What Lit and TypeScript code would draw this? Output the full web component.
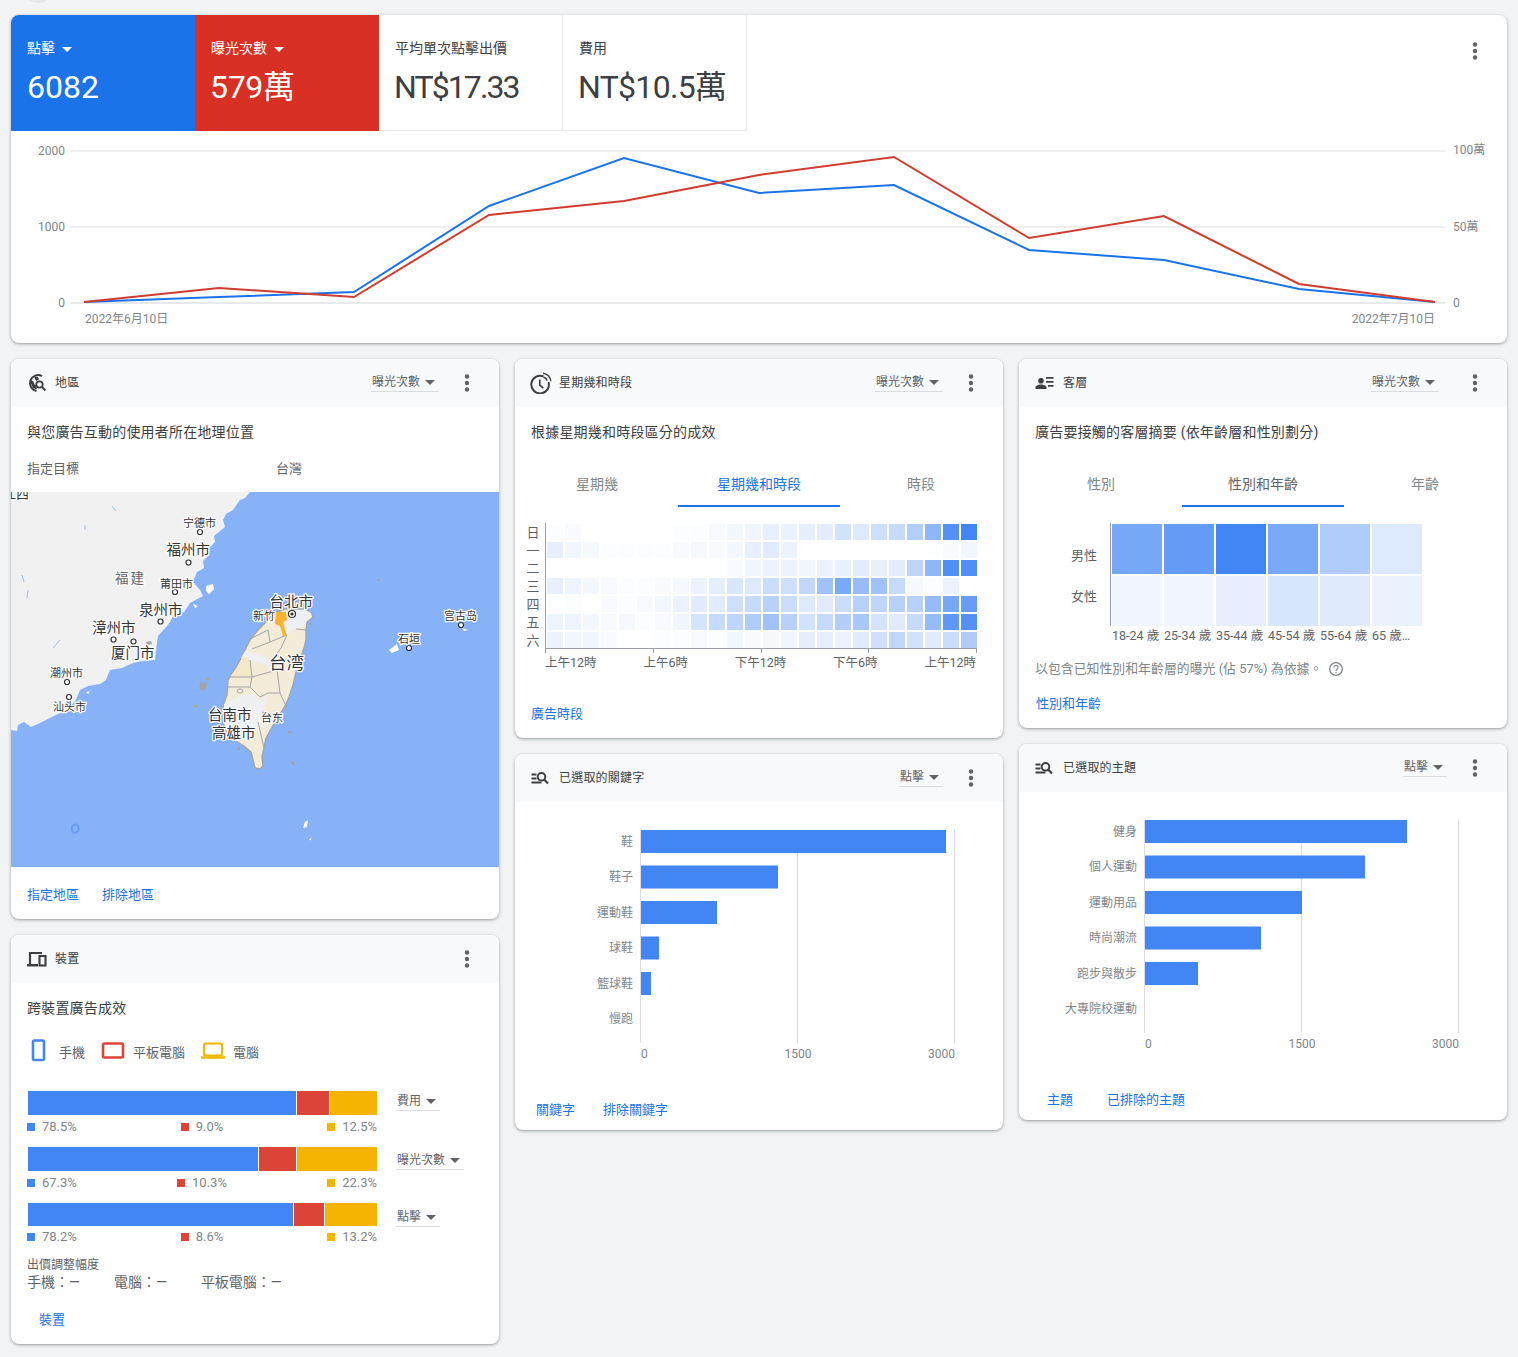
import { LitElement, html, svg, css } from 'lit'
import { customElement } from 'lit/decorators.js'

const BLUE = '#4285f4'

const HEAT = [
  [.02, .03, 0, 0, 0, 0, 0, .02, .02, .04, .06, .08, .12, .11, .14, .15, .23, .18, .26, .3, .4, .6, .9, 1],
  [.13, .07, .05, .02, .02, .02, .02, .04, .05, .04, .06, .12, .16, .1, 0, 0, 0, 0, 0, 0, 0, .01, .03, .07],
  [0, 0, 0, 0, 0, 0, 0, 0, 0, 0, .03, .08, .1, .1, .08, .1, .12, .15, .12, .15, .35, .6, .92, .92],
  [.12, .09, .06, .04, .02, .02, .03, .05, .1, .14, .2, .18, .28, .26, .32, .5, .7, .55, .5, .3, .05, .02, .1, 0],
  [.01, .02, 0, .03, .02, .04, .07, .1, .16, .16, .26, .3, .38, .28, .18, .16, .28, .38, .34, .38, .38, .56, .72, .8],
  [.09, .09, .06, .04, .05, .02, .04, .08, .22, .3, .34, .42, .5, .38, .24, .3, .4, .46, .22, .16, .3, .56, .85, .9],
  [.1, .07, .08, .03, 0, 0, .02, .02, .04, .02, .06, .04, .05, .08, .14, .13, .1, .16, .25, .32, .24, .16, .28, .42],
]

const GENDER = [
  [.72, .82, 1, .7, .42, .18],
  [.08, .08, .13, .2, .17, .11],
]

const DEVICE_ROWS = [
  { label: '費用', split: [268, 32, 47], values: ['78.5%', '9.0%', '12.5%'], barH: 24, gap: 5, drop: 2 },
  { label: '曝光次數', split: [230, 37, 80], values: ['67.3%', '10.3%', '22.3%'], barH: 24, gap: 5, drop: 5 },
  { label: '點擊', split: [265, 30, 52], values: ['78.2%', '8.6%', '13.2%'], barH: 23, gap: 4, drop: 6 },
]

const BLUE_LINE = [[84, 302], [219, 297], [354, 292], [489, 206], [624, 158], [759, 193], [894, 185], [1029, 250], [1164, 260], [1299, 289], [1435, 302]]
const RED_LINE = [[84, 302], [219, 288], [354, 297], [489, 215], [624, 201], [759, 175], [894, 157], [1029, 238], [1164, 216], [1299, 284], [1435, 302]]

const MAP_LABELS: [string, number, number, number, string?][] = [
  ['宁德市', 183, 527, 11],
  ['福州市', 166.500, 555, 14.500],
  ['福建', 115, 583, 13.500, 'prov'],
  ['莆田市', 160, 588, 11],
  ['泉州市', 139, 615, 14.500],
  ['漳州市', 92, 633, 14.500],
  ['厦门市', 111, 658, 14.500],
  ['潮州市', 50, 677, 11],
  ['汕头市', 53, 711, 11],
  ['台北市', 269.500, 607, 14.500],
  ['新竹', 253, 620, 11],
  ['宫古岛', 444, 620, 11],
  ['石垣', 398, 643, 11],
  ['台湾', 269, 669, 17.500],
  ['台南市', 208, 720, 14.500],
  ['台东', 261, 722, 11],
  ['高雄市', 212, 738, 14.500],
]

const MAP_DOTS = [[200, 532], [188.500, 562.500], [175, 592], [160.500, 621.500], [113.500, 639.500], [133.500, 641.500], [67, 682], [69, 697], [461, 625], [409, 648]]

const kebab = html`<svg class="kebab" width="24" height="24" viewBox="0 0 24 24"><circle cx="12" cy="5.500" r="2.200"/><circle cx="12" cy="12" r="2.200"/><circle cx="12" cy="18.500" r="2.200"/></svg>`

const icons = {
  geo: html`<svg width="20" height="20" viewBox="0 0 20 20" fill="none" stroke="#3c4043"><path d="M15 3.200A8 8 0 1 0 9.500 18" stroke-width="2"/><path d="M3 6.500l3.500 2 1 3 2.500 1.500-.5 3.500-3.500-1.500-1.500-3.500L2.500 9.500z" fill="#3c4043" stroke="none"/><path d="M7 3.500l4 .5 1 2.500-3 1.500z" fill="#3c4043" stroke="none"/><circle cx="12.500" cy="11.500" r="3.200" stroke-width="1.800"/><path d="M15 14l3.500 3.500" stroke-width="2"/></svg>`,
  clock: html`<svg width="22" height="22" viewBox="0 0 22 22" fill="none" stroke="#3c4043" style="margin-left:-1px"><path d="M13.500 4.500A8.800 8.800 0 1 0 18.500 10" stroke-width="2"/><path d="M9.800 7.500v5.700l3.500 3" stroke-width="1.700"/><path d="M13 1.200a8.800 8.800 0 0 1 7.800 8" stroke-width="1.500"/><path d="M13.500 5.200a4.500 4.500 0 0 1 3.500 3.500" stroke-width="1.500"/></svg>`,
  people: html`<svg width="20" height="14" viewBox="0 0 20 14" fill="#3c4043"><circle cx="6" cy="4.800" r="2.800"/><path d="M.5 13v-1.500C.5 9.500 3.500 8.500 6 8.500s5.500 1 5.500 3V13z"/><path d="M11 1h7.500v1.700H11zM11 5h7.500v1.700H11zM13 9h5.500v1.700H13z"/></svg>`,
  devices: html`<svg width="20" height="16" viewBox="0 0 20 16" fill="none" stroke="#3c4043"><path d="M3 14V2h12" stroke-width="2.200"/><path d="M0 14.200h11" stroke-width="2.400"/><rect x="12.500" y="5" width="6" height="9.500" stroke-width="2.100"/></svg>`,
  searchList: html`<svg width="18" height="14" viewBox="0 0 18 14" fill="none" stroke="#3c4043"><path d="M.5 3.500h5M.5 7.500h5M.5 11.500h10" stroke-width="1.800"/><circle cx="10.500" cy="5.800" r="3.800" stroke-width="2"/><path d="M13.300 8.800l3.700 3.700" stroke-width="2.200"/></svg>`,
}

const dropdown = (label: string, style = '') => html`<span class="drop" style=${style}><span>${label}</span><i class="caret"></i></span>`

const header = (icon: unknown, title: string, drop?: string, wide = false) => html`
  <header class="card-head">
    <span class="head-icon">${icon}</span>
    <span class="head-title">${title}</span>
    <span class="head-right ${wide ? 'wide' : ''}">${drop ? dropdown(drop) : ''}${kebab}</span>
  </header>
`

const tabs = (names: string[], activeClass: string) => html`
  <div class="tabs">
    ${names.map((n, i) => html`<div class="tab ${i === 1 ? activeClass : ''}">${n}</div>`)}
  </div>
`

const barChart = (rows: [string, number][]) => html`
  <svg class="bars" width="488" height="280" viewBox="0 0 488 280">
    <path d="M125.500 28v213M282.500 28v213M439.500 28v213" stroke="#dadce0" fill="none"/>
    ${rows.map(([label, w], i) => {
      const y = 28 + i * 35.500
      return svg`
        <text class="cat" x="118" y=${y + 15.500} text-anchor="end">${label}</text>
        ${w ? svg`<rect x="126" y=${y} width=${w} height="23" fill=${BLUE}/>` : ''}
      `
    })}
    <text class="tick" x="126" y="256">0</text>
    <text class="tick" x="283" y="256" text-anchor="middle">1500</text>
    <text class="tick" x="440" y="256" text-anchor="end">3000</text>
  </svg>
`

@customElement('app-root')
export class AppRoot extends LitElement {
  static styles = css`
    :host {
      display: block;
      position: relative;
      min-height: 1357px;
      background: #f1f3f4;
      font-family: Roboto, "Noto Sans CJK TC", sans-serif;
      color: #3c4043;
      font-size: 13px;
    }

    .peek {
      position: absolute;
      left: 22px;
      top: -26px;
      width: 32px;
      height: 29px;
      border-radius: 50%;
      background: #e5e7e9;
    }

    .page {
      padding: 15px 11px 0;
      display: flex;
      flex-direction: column;
      gap: 16px;
    }

    .card {
      background: #fff;
      border-radius: 8px;
      overflow: hidden;
      box-shadow: 0 1px 2px rgba(60, 64, 67, .3), 0 1px 3px 1px rgba(60, 64, 67, .15);
    }

    .columns {
      display: grid;
      grid-template-columns: repeat(3, 488px);
      gap: 16px;
      align-items: start;
    }

    .col {
      display: flex;
      flex-direction: column;
      gap: 16px;
    }

    /* summary */
    .metrics {
      display: flex;
      height: 116px;
    }

    .tile {
      box-sizing: border-box;
      width: 184px;
      padding: 24px 16px 0;
      border-right: 1px solid #e8eaed;
      border-bottom: 1px solid #e8eaed;
    }

    .tile.blue { background: #1a73e8; color: #fff; border: 0; }
    .tile.red { background: #d93025; color: #fff; border: 0; }

    .tile-label {
      display: flex;
      align-items: center;
      gap: 7px;
      font-size: 14px;
      line-height: 18px;
    }

    .tile-caret {
      width: 0;
      height: 0;
      border-left: 5.500px solid transparent;
      border-right: 5.500px solid transparent;
      border-top: 5.500px solid #fff;
      margin-top: 2px;
    }

    .tile-value {
      font-size: 32px;
      line-height: 40px;
      margin-top: 10px;
      white-space: nowrap;
    }

    .tile-value.nudge { margin-left: -1px; letter-spacing: -.3px; }
    .tile-value.tight { letter-spacing: -1.900px; margin-left: -1px; }
    .tile-value.snug { letter-spacing: -.7px; margin-left: -1px; }

    .metrics .kebab {
      margin: 24px 20px 0 auto;
    }

    .kebab { fill: #5f6368; flex: none; }

    .line-chart { display: block; }
    .axis { font-size: 12px; fill: #80868b; }

    /* card head */
    .card-head {
      display: flex;
      align-items: center;
      height: 48px;
      padding: 0 20px 0 16px;
      background: #f8f9fa;
    }

    .head-icon {
      width: 28px;
      display: flex;
      align-items: center;
    }

    .head-title {
      font-size: 12px;
      letter-spacing: .2px;
      color: #3c4043;
      padding-bottom: 3px;
    }

    .head-right {
      margin-left: auto;
      display: flex;
      align-items: center;
      gap: 16px;
    }

    .head-right.wide { gap: 24px; }

    .drop {
      display: inline-flex;
      align-items: center;
      gap: 5px;
      height: 17px;
      padding: 0 4px 0 1px;
      font-size: 12px;
      line-height: 17px;
      color: #5f6368;
      border-bottom: 1px solid #dadce0;
    }

    .caret {
      width: 0;
      height: 0;
      border-left: 5px solid transparent;
      border-right: 5px solid transparent;
      border-top: 5px solid #5f6368;
    }

    .sub {
      margin: 15px 16px 0;
      font-size: 14px;
      line-height: 20px;
      letter-spacing: .2px;
      color: #3c4043;
    }

    /* map */
    .target {
      display: flex;
      margin: 17px 16px 13px;
      line-height: 20px;
      color: #5f6368;
    }

    .target span:first-child { width: 249px; }

    .map { display: block; }
    .map text {
      font-family: "Noto Sans CJK SC", sans-serif;
      fill: #333;
      stroke: #fff;
      stroke-width: 2.500px;
      paint-order: stroke;
      stroke-linejoin: round;
    }
    .map text.prov { fill: #666; letter-spacing: 2px; }

    .links {
      display: flex;
      line-height: 20px;
      color: #1a73e8;
    }

    .links.map-links { padding: 18px 16px 14px; gap: 23px; }
    .links.time-links { padding: 0 16px; margin-top: 33px; height: 34px; }
    .links.age-links { padding: 0 17px; margin-top: 16px; height: 34px; }
    .links.kw-links { padding: 18px 21px 10px; gap: 28px; }
    .links.topic-links { padding: 18px 28px 10px; gap: 34px; }
    .links.dev-links { padding: 19px 28px 14px; }

    /* tabs */
    .tabs {
      display: grid;
      grid-template-columns: repeat(3, 162px);
      margin: 20px 1px 0;
    }

    .tab {
      box-sizing: border-box;
      height: 45px;
      line-height: 44px;
      font-size: 14px;
      text-align: center;
      color: #80868b;
      border-bottom: 2px solid transparent;
    }

    .tab.on-blue { color: #1a73e8; border-bottom-color: #1a73e8; }
    .tab.on-dark { color: #5f6368; border-bottom-color: #1a73e8; }

    /* weekday heatmap */
    .heat {
      margin: 16px 0 0 9px;
      display: flex;
    }

    .days {
      width: 18px;
      margin: 2px 3px 0 0;
      display: grid;
      grid-template-rows: repeat(7, 16px);
      gap: 2px;
      text-align: center;
      font-size: 13px;
      line-height: 16px;
      color: #5f6368;
    }

    .heat-main { width: 432px; }

    .heat-grid {
      display: grid;
      grid-template-columns: repeat(24, 16px);
      grid-auto-rows: 16px;
      gap: 2px;
      padding: 1px 0 0 1px;
      border-left: 1px solid #9aa0a6;
    }

    .ticks {
      display: flex;
      justify-content: space-between;
      height: 4px;
      border-top: 1px solid #9aa0a6;
    }

    .ticks i { width: 1px; background: #9aa0a6; }

    .hours {
      display: flex;
      justify-content: space-between;
      margin: 2px 1px 0 0;
      line-height: 16px;
      color: #5f6368;
      font-size: 12.500px;
    }

    /* age heatmap */
    .age {
      display: flex;
      margin-top: 16px;
    }

    .age-names {
      box-sizing: border-box;
      width: 78px;
      height: 103px;
      padding-top: 4px;
      display: flex;
      flex-direction: column;
      justify-content: center;
      gap: 27px;
      text-align: right;
      font-size: 13px;
      line-height: 14px;
      color: #5f6368;
    }

    .age-main { margin-left: 13px; }

    .age-grid {
      display: grid;
      grid-template-columns: repeat(6, 50px);
      grid-auto-rows: 50px;
      gap: 2px;
      padding: 1px 0 0 1px;
      border-left: 1px solid #9aa0a6;
    }

    .age-labels {
      display: grid;
      grid-template-columns: repeat(6, 50px);
      gap: 2px;
      padding-left: 2px;
      margin-top: 2px;
      line-height: 16px;
      font-size: 12.500px;
      color: #5f6368;
      white-space: nowrap;
    }

    .note {
      display: flex;
      align-items: center;
      gap: 6px;
      margin: 16px 16px 0;
      line-height: 18px;
      font-size: 12.900px;
      color: #80868b;
    }

    /* bars */
    .bars { display: block; }
    .cat { font-size: 12px; fill: #80868b; }
    .tick { font-size: 12px; fill: #80868b; }

    /* devices */
    .legend {
      display: flex;
      align-items: center;
      gap: 16px;
      margin: 21px 0 0 16px;
      height: 24px;
      color: #5f6368;
    }

    .legend-item {
      display: flex;
      align-items: center;
      gap: 8px;
    }

    .stacks { margin: 28px 0 0 16px; }

    .stack-row { display: flex; height: 56px; }
    .stack-row:last-child { height: 54px; }

    .stack-main { width: 350px; }

    .stack-bar {
      display: flex;
      gap: 1px;
      margin-left: 1px;
      width: 349px;
    }

    .stack-vals {
      display: flex;
      justify-content: space-between;
      line-height: 14px;
      font-size: 13px;
      color: #80868b;
    }

    .stack-val {
      display: flex;
      align-items: center;
      gap: 7px;
    }

    .sq { width: 8px; height: 8px; }

    .stack-drop { margin-left: 19px; }

    .bid {
      margin: 0 16px;
      color: #5f6368;
    }

    .bid-title { font-size: 12px; line-height: 16px; }

    .bid-vals {
      display: flex;
      gap: 34px;
      line-height: 18px;
      font-size: 14px;
    }
  `

  private renderSummary() {
    const d = (pts: number[][]) => 'M' + pts.map((p) => p.join(' ')).join('L')
    return html`
      <section class="card">
        <div class="metrics">
          <div class="tile blue">
            <div class="tile-label">點擊<i class="tile-caret"></i></div>
            <div class="tile-value">6082</div>
          </div>
          <div class="tile red">
            <div class="tile-label">曝光次數<i class="tile-caret"></i></div>
            <div class="tile-value nudge">579萬</div>
          </div>
          <div class="tile">
            <div class="tile-label">平均單次點擊出價</div>
            <div class="tile-value tight">NT$17.33</div>
          </div>
          <div class="tile">
            <div class="tile-label">費用</div>
            <div class="tile-value snug">NT$10.5萬</div>
          </div>
          ${kebab}
        </div>
        <svg class="line-chart" width="1496" height="212" viewBox="11 131 1496 212">
          <path d="M70 151h1375M70 227h1375" stroke="#e8eaed" stroke-width="1.500" fill="none"/>
          <path d="M70 303h1375" stroke="#e0e2e4" stroke-width="1.500" fill="none"/>
          <text class="axis" x="65" y="155" text-anchor="end">2000</text>
          <text class="axis" x="65" y="231" text-anchor="end">1000</text>
          <text class="axis" x="65" y="307" text-anchor="end">0</text>
          <text class="axis" x="1453" y="154">100萬</text>
          <text class="axis" x="1453" y="231">50萬</text>
          <text class="axis" x="1453" y="307">0</text>
          <text class="axis" x="85" y="323">2022年6月10日</text>
          <text class="axis" x="1435" y="323" text-anchor="end">2022年7月10日</text>
          <path d=${d(BLUE_LINE)} fill="none" stroke="#1a73e8" stroke-width="2"/>
          <path d=${d(RED_LINE)} fill="none" stroke="#d03c30" stroke-width="2"/>
        </svg>
      </section>
    `
  }

  private renderMap() {
    return html`
      <svg class="map" width="488" height="375" viewBox="11 492 488 375">
        <rect x="11" y="492" width="488" height="375" fill="#87b2f7"/>
        <path fill="#f1f1f1" d="M11 492H250L245 498L240 500L233 510L226 514L223 520L225 527L214 536L215 542L209 548L208 556L203 561L204 568L197 572L193 582L200 590L203 596L190 603L184 612L174 615L168 625L158 636L156 650L155 660L143 661L133 663L122 668L110 670L106 680L100 684L88 686L80 690L76 700L67 710L58 714L50 718L42 722L31 727L24 722L18 725L17 731L11 730Z"/>
        <path fill="#fff" d="M206 586l7-2 1 5-5 5-3-3zM193 604l5 2-3 2zM389 650l8-6 2 6-7 3zM462 628l6 2-4 1zM305 822l3-2-1 7-4 1zM309 839l3-.5-2 2zM86 692l4-1-2 3z"/>
        <path fill="none" stroke="#9bbdf5" d="M112 506l4 5M85 525v5M22 575l2 7M28 590l-1 8M60 640l-7 8"/>
        <path fill="none" stroke="#6a9bf5" stroke-width="2" d="M72 826q4-3 6 0q2 4-1 6q-5 2-5-2z"/>
        <path fill="#a5a5a5" d="M201 682l6 1-1 6-4 2-3-3zM206 678h3v2h-3zM194 705h3v2h-3zM288 731l4 .5v2h-4zM290 761l4 1 1 3-3-1zM237 747h3v3h-3zM377 579h3v2h-3zM309 623h3v2h-3zM146 642l5-1 1 3-5 1z"/>

        <path fill="#f3ecd9" stroke="#a5a5a5" stroke-width="1.400" stroke-linejoin="round" d="M296 609L305 609L311 613L313 617L307 622L306 630L306 640L304 648L300 660L296 672L293 685L289 697L285 706L282 711L278 717L272 727L266 738L264 748L262 757L263 766L260 769L255 768L253 760L251 752L244 746L236 741L228 735L224 725L222 712L224 703L227 695L228 680L236 668L244 652L250 640L258 630L267 621L275 613L285 609Z"/>
        <path fill="#eff0f3" d="M296 610L305 610L311 613L312 617L306 622L304 626L295 629L288 634L287 620L288 611ZM245 651L268 658L272 668L262 664L241 658ZM224 704L243 695L255 695L260 703L268 693L263 712L264 723L248 738L238 741L228 735L224 722Z"/>
        <path fill="#f5e8c8" d="M250 660L252 677L230 677L237 667L244 656Z"/>
        <path fill="none" stroke="#a5a5a5" stroke-width="1" d="M252 638L268 630L270 642L252 649M270 642L282 637L287 635M287 635L281 648L272 660M250 660L252 677L228 677M252 677L250 687L260 697L268 693M252 677L277 670L280 693L268 693M280 693L287 708M227 687L250 687M262 712L273 716M258 722L264 748M296 629L306 630"/>
        <ellipse cx="240" cy="691" rx="3" ry="2" fill="none" stroke="#a5a5a5"/>
        <path fill="#f5b32f" d="M276 612L286 612L287 620L283 622L285 630L287 636L283 636L280 626L275 624Z"/>

        ${MAP_DOTS.map(([x, y]) => svg`<circle cx=${x} cy=${y} r="2.500" fill="#fff" stroke="#333" stroke-width="1.200"/>`)}
        <circle cx="292" cy="614" r="3.500" fill="#fff" stroke="#333" stroke-width="1.200"/>
        <circle cx="292" cy="614" r="1.600" fill="#333"/>

        ${MAP_LABELS.map(([t, x, y, s, c]) => svg`<text class=${c ?? ''} x=${x} y=${y} font-size=${s}>${t}</text>`)}
        <text x="3" y="498" font-size="13">江西</text>
      </svg>
    `
  }

  private renderWeekHeat() {
    return html`
      <div class="heat">
        <div class="days">${'日一二三四五六'.split('').map((d) => html`<span>${d}</span>`)}</div>
        <div class="heat-main">
          <div class="heat-grid">
            ${HEAT.flat().map((a) => html`<i style="background:rgba(66,133,244,${a})"></i>`)}
          </div>
          <div class="ticks"><i></i><i></i><i></i><i></i><i></i></div>
          <div class="hours">
            <span>上午12時</span><span>上午6時</span><span>下午12時</span><span>下午6時</span><span>上午12時</span>
          </div>
        </div>
      </div>
    `
  }

  private renderAgeHeat() {
    return html`
      <div class="age">
        <div class="age-names"><span>男性</span><span>女性</span></div>
        <div class="age-main">
          <div class="age-grid">
            ${GENDER.flat().map((a) => html`<i style="background:rgba(66,133,244,${a})"></i>`)}
          </div>
          <div class="age-labels">
            <span>18-24 歲</span><span>25-34 歲</span><span>35-44 歲</span><span>45-54 歲</span><span>55-64 歲</span><span>65 歲…</span>
          </div>
        </div>
      </div>
    `
  }

  private renderDevices() {
    const colors = [BLUE, '#db4437', '#f4b400']
    return html`
      <div class="legend">
        <span class="legend-item">
          <svg width="24" height="24" viewBox="0 0 24 24" fill="none"><rect x="6" y="1.500" width="11" height="19.500" rx="1.500" stroke=${BLUE} stroke-width="2.600"/></svg>手機
        </span>
        <span class="legend-item">
          <svg width="24" height="24" viewBox="0 0 24 24" fill="none"><rect x="2" y="4.500" width="20" height="14" rx="1.500" stroke="#db4437" stroke-width="2.600"/></svg>平板電腦
        </span>
        <span class="legend-item">
          <svg width="24" height="24" viewBox="0 0 24 24" fill="none"><rect x="3" y="4.500" width="18" height="12" rx="1" stroke="#f4b400" stroke-width="2"/><path d="M0 18.500h24" stroke="#f4b400" stroke-width="2.500"/></svg>電腦
        </span>
      </div>
      <div class="stacks">
        ${DEVICE_ROWS.map((r) => html`
          <div class="stack-row">
            <div class="stack-main">
              <div class="stack-bar" style="height:${r.barH}px">
                ${r.split.map((w, i) => html`<i style="width:${w}px;background:${colors[i]}"></i>`)}
              </div>
              <div class="stack-vals" style="margin-top:${r.gap}px">
                ${r.values.map((v, i) => html`<span class="stack-val"><i class="sq" style="background:${colors[i]}"></i>${v}</span>`)}
              </div>
            </div>
            <div class="stack-drop">${dropdown(r.label, `margin-top:${r.drop}px`)}</div>
          </div>
        `)}
      </div>
      <div class="bid">
        <div class="bid-title">出價調整幅度</div>
        <div class="bid-vals"><span>手機：—</span><span>電腦：—</span><span>平板電腦：—</span></div>
      </div>
    `
  }

  render() {
    return html`
      <div class="peek"></div>
      <div class="page">
        ${this.renderSummary()}
        <div class="columns">
          <div class="col">
            <section class="card">
              ${header(icons.geo, '地區', '曝光次數')}
              <div class="sub">與您廣告互動的使用者所在地理位置</div>
              <div class="target"><span>指定目標</span><span>台灣</span></div>
              ${this.renderMap()}
              <div class="links map-links"><span>指定地區</span><span>排除地區</span></div>
            </section>
            <section class="card">
              ${header(icons.devices, '裝置')}
              <div class="sub">跨裝置廣告成效</div>
              ${this.renderDevices()}
              <div class="links dev-links"><span>裝置</span></div>
            </section>
          </div>
          <div class="col">
            <section class="card">
              ${header(icons.clock, '星期幾和時段', '曝光次數')}
              <div class="sub">根據星期幾和時段區分的成效</div>
              ${tabs(['星期幾', '星期幾和時段', '時段'], 'on-blue')}
              ${this.renderWeekHeat()}
              <div class="links time-links"><span>廣告時段</span></div>
            </section>
            <section class="card">
              ${header(icons.searchList, '已選取的關鍵字', '點擊')}
              ${barChart([['鞋', 305], ['鞋子', 137], ['運動鞋', 76], ['球鞋', 18], ['籃球鞋', 10], ['慢跑', 0]])}
              <div class="links kw-links"><span>關鍵字</span><span>排除關鍵字</span></div>
            </section>
          </div>
          <div class="col">
            <section class="card">
              ${header(icons.people, '客層', '曝光次數', true)}
              <div class="sub">廣告要接觸的客層摘要 (依年齡層和性別劃分)</div>
              ${tabs(['性別', '性別和年齡', '年齡'], 'on-dark')}
              ${this.renderAgeHeat()}
              <div class="note">
                <span>以包含已知性別和年齡層的曝光 (佔 57%) 為依據。</span>
                <svg width="16" height="16" viewBox="0 0 16 16" fill="none" stroke="#80868b"><circle cx="8" cy="8" r="6.300" stroke-width="1.300"/><path d="M6 6.500a2 2 0 1 1 3 1.700c-.8.5-1 .9-1 1.700" stroke-width="1.200"/><path d="M8 11v1.200" stroke-width="1.200"/></svg>
              </div>
              <div class="links age-links"><span>性別和年齡</span></div>
            </section>
            <section class="card">
              ${header(icons.searchList, '已選取的主題', '點擊')}
              ${barChart([['健身', 262], ['個人運動', 220], ['運動用品', 157], ['時尚潮流', 116], ['跑步與散步', 53], ['大專院校運動', 0]])}
              <div class="links topic-links"><span>主題</span><span>已排除的主題</span></div>
            </section>
          </div>
        </div>
      </div>
    `
  }
}
